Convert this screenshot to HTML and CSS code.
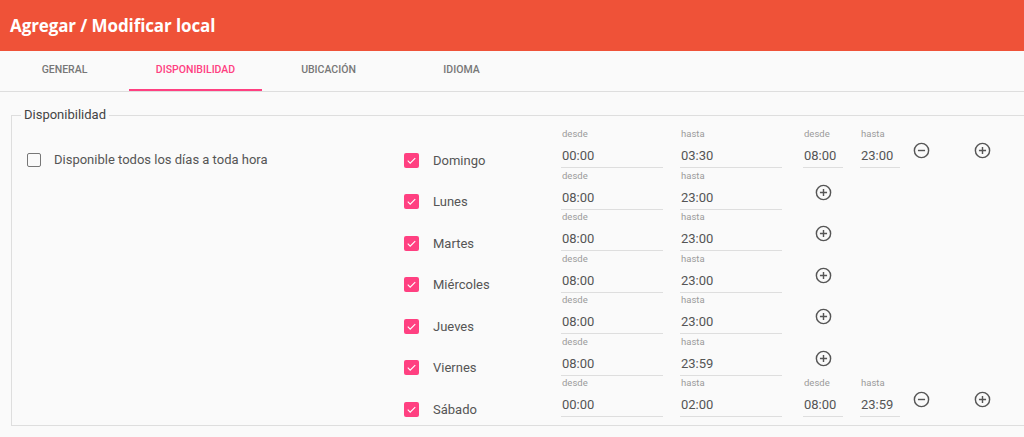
FILE: index.html
```html
<!DOCTYPE html>
<html lang="es">
<head>
  <meta charset="UTF-8" />
  <meta name="viewport" content="width=device-width, initial-scale=1" />
  <title>Agregar / Modificar local</title>
  <link rel="stylesheet" href="styles.css">
</head>
<body>
  <header class="toolbar">
    <h1>Agregar / Modificar local</h1>
  </header>

  <nav class="tabs">
    <a class="tab tab-first">General</a>
    <a class="tab active">Disponibilidad</a>
    <a class="tab">Ubicación</a>
    <a class="tab">Idioma</a>
  </nav>

  <main class="content">
    <fieldset class="panel">
      <legend>Disponibilidad</legend>
      <div class="panel-body">
        <div class="all-day">
          <span class="box"></span>
          <span class="all-day-label">Disponible todos los días a toda hora</span>
        </div>

        <div class="days" id="days"></div>
      </div>
    </fieldset>
  </main>

  <script>
    const days = [
      { name: "Domingo", ranges: [["00:00", "03:30"], ["08:00", "23:00"]] },
      { name: "Lunes", ranges: [["08:00", "23:00"]] },
      { name: "Martes", ranges: [["08:00", "23:00"]] },
      { name: "Miércoles", ranges: [["08:00", "23:00"]] },
      { name: "Jueves", ranges: [["08:00", "23:00"]] },
      { name: "Viernes", ranges: [["08:00", "23:59"]] },
      { name: "Sábado", ranges: [["00:00", "02:00"], ["08:00", "23:59"]] }
    ];

    const plusIcon = '<svg viewBox="0 0 24 24" width="19" height="19"><circle cx="12" cy="12" r="9" fill="none" stroke="currentColor" stroke-width="1.8"/><path d="M12 7.5v9M7.5 12h9" stroke="currentColor" stroke-width="1.8"/></svg>';
    const minusIcon = '<svg viewBox="0 0 24 24" width="19" height="19"><circle cx="12" cy="12" r="9" fill="none" stroke="currentColor" stroke-width="1.8"/><path d="M7.5 12h9" stroke="currentColor" stroke-width="1.8"/></svg>';
    const checkIcon = '<svg viewBox="0 0 16 16" width="15" height="15"><path d="M4 8.2l2.6 2.6L12 5.4" fill="none" stroke="#fff" stroke-width="1.2"/></svg>';

    function field(label, value, size) {
      return '<div class="field ' + size + '">' +
        '<span class="field-label">' + label + '</span>' +
        '<span class="field-value">' + value + '</span>' +
        '</div>';
    }

    const container = document.getElementById("days");

    days.forEach(day => {
      let html = '<div class="day">' +
        '<span class="box checked">' + checkIcon + '</span>' +
        '<span class="day-name">' + day.name + '</span>' +
        '</div>';

      html += field("desde", day.ranges[0][0], "wide");
      html += field("hasta", day.ranges[0][1], "wide last");

      if (day.ranges.length > 1) {
        html += field("desde", day.ranges[1][0], "narrow");
        html += field("hasta", day.ranges[1][1], "narrow last");
        html += '<button class="icon-btn remove">' + minusIcon + '</button>';
        html += '<button class="icon-btn add far">' + plusIcon + '</button>';
      } else {
        html += '<button class="icon-btn add">' + plusIcon + '</button>';
      }

      const row = document.createElement("div");
      row.className = "row";
      row.innerHTML = html;
      container.appendChild(row);
    });
  </script>
</body>
</html>
```

FILE: styles.css
```css
:root {
  --header-color: #ef5238;
  --accent-color: #ff4081;
  --text-color: #555;
  --muted-color: #9a9a9a;
  --line-color: #dedede;
  --bg-color: #fafafa;
}

body {
  margin: 0;
  font-family: Roboto, 'Liberation Sans', sans-serif;
  background-color: var(--bg-color);
  color: var(--text-color);
  overflow: hidden;
}

.toolbar {
  height: 51px;
  background-color: var(--header-color);
  display: flex;
  align-items: center;
  padding-left: 10px;
}

.toolbar h1 {
  margin: 0;
  font-family: 'Open Sans', sans-serif;
  font-size: 17px;
  font-weight: 700;
  color: #fff;
  letter-spacing: -0.1px;
}

.tabs {
  display: flex;
  height: 40px;
  border-bottom: 1px solid var(--line-color);
}

.tab {
  width: 133px;
  box-sizing: border-box;
  display: flex;
  align-items: center;
  justify-content: center;
  padding-bottom: 4px;
  font-size: 10.5px;
  font-weight: 500;
  text-transform: uppercase;
  color: #777;
}

.tab-first {
  width: 129px;
}

.tab.active {
  color: var(--accent-color);
  border-bottom: 2px solid var(--accent-color);
  padding-bottom: 2px;
}

.content {
  padding: 15px 0 0 11px;
}

.panel {
  width: 1040px;
  margin: 0;
  padding: 0;
  border: 1px solid var(--line-color);
}

.panel legend {
  margin-left: 9px;
  padding: 0 3px;
  font-size: 13px;
  line-height: 16px;
  color: #444;
}

.panel-body {
  display: flex;
  padding: 5px 0 6px;
}

.all-day {
  width: 392px;
  height: 41.5px;
  box-sizing: border-box;
  padding: 0 0 3px 15px;
  display: flex;
  align-items: flex-end;
}

.all-day-label {
  margin-left: 13px;
  font-size: 13px;
  line-height: 15px;
}

.box {
  width: 14px;
  height: 14px;
  border: 1.5px solid #777;
  border-radius: 2px;
  box-sizing: border-box;
  flex-shrink: 0;
}

.box.checked {
  width: 15px;
  height: 15px;
  border: none;
  background-color: var(--accent-color);
  display: flex;
}

.row {
  display: flex;
  height: 41.5px;
}

.day {
  width: 157px;
  display: flex;
  align-items: center;
  align-self: flex-end;
  margin-bottom: 2px;
}

.day-name {
  margin-left: 14px;
  font-size: 13px;
  line-height: 15px;
}

.field {
  display: flex;
  flex-direction: column;
  margin-right: 17px;
}

.field.wide {
  width: 102px;
}

.field.narrow {
  width: 40px;
}

.field.last {
  margin-right: 21px;
}

.field.narrow.last {
  margin-right: 1px;
}

.field-label {
  font-size: 9.5px;
  line-height: 12px;
  color: var(--muted-color);
  padding-left: 1px;
}

.field-value {
  padding: 8px 0 3px 1px;
  font-size: 13px;
  line-height: 16px;
  border-bottom: 1px solid var(--line-color);
}

.icon-btn {
  width: 40px;
  height: 19px;
  margin-top: 13px;
  padding: 0;
  border: none;
  background: none;
  color: #555;
  display: flex;
  justify-content: center;
  cursor: pointer;
}

.icon-btn.far {
  margin-left: 21px;
}
```
